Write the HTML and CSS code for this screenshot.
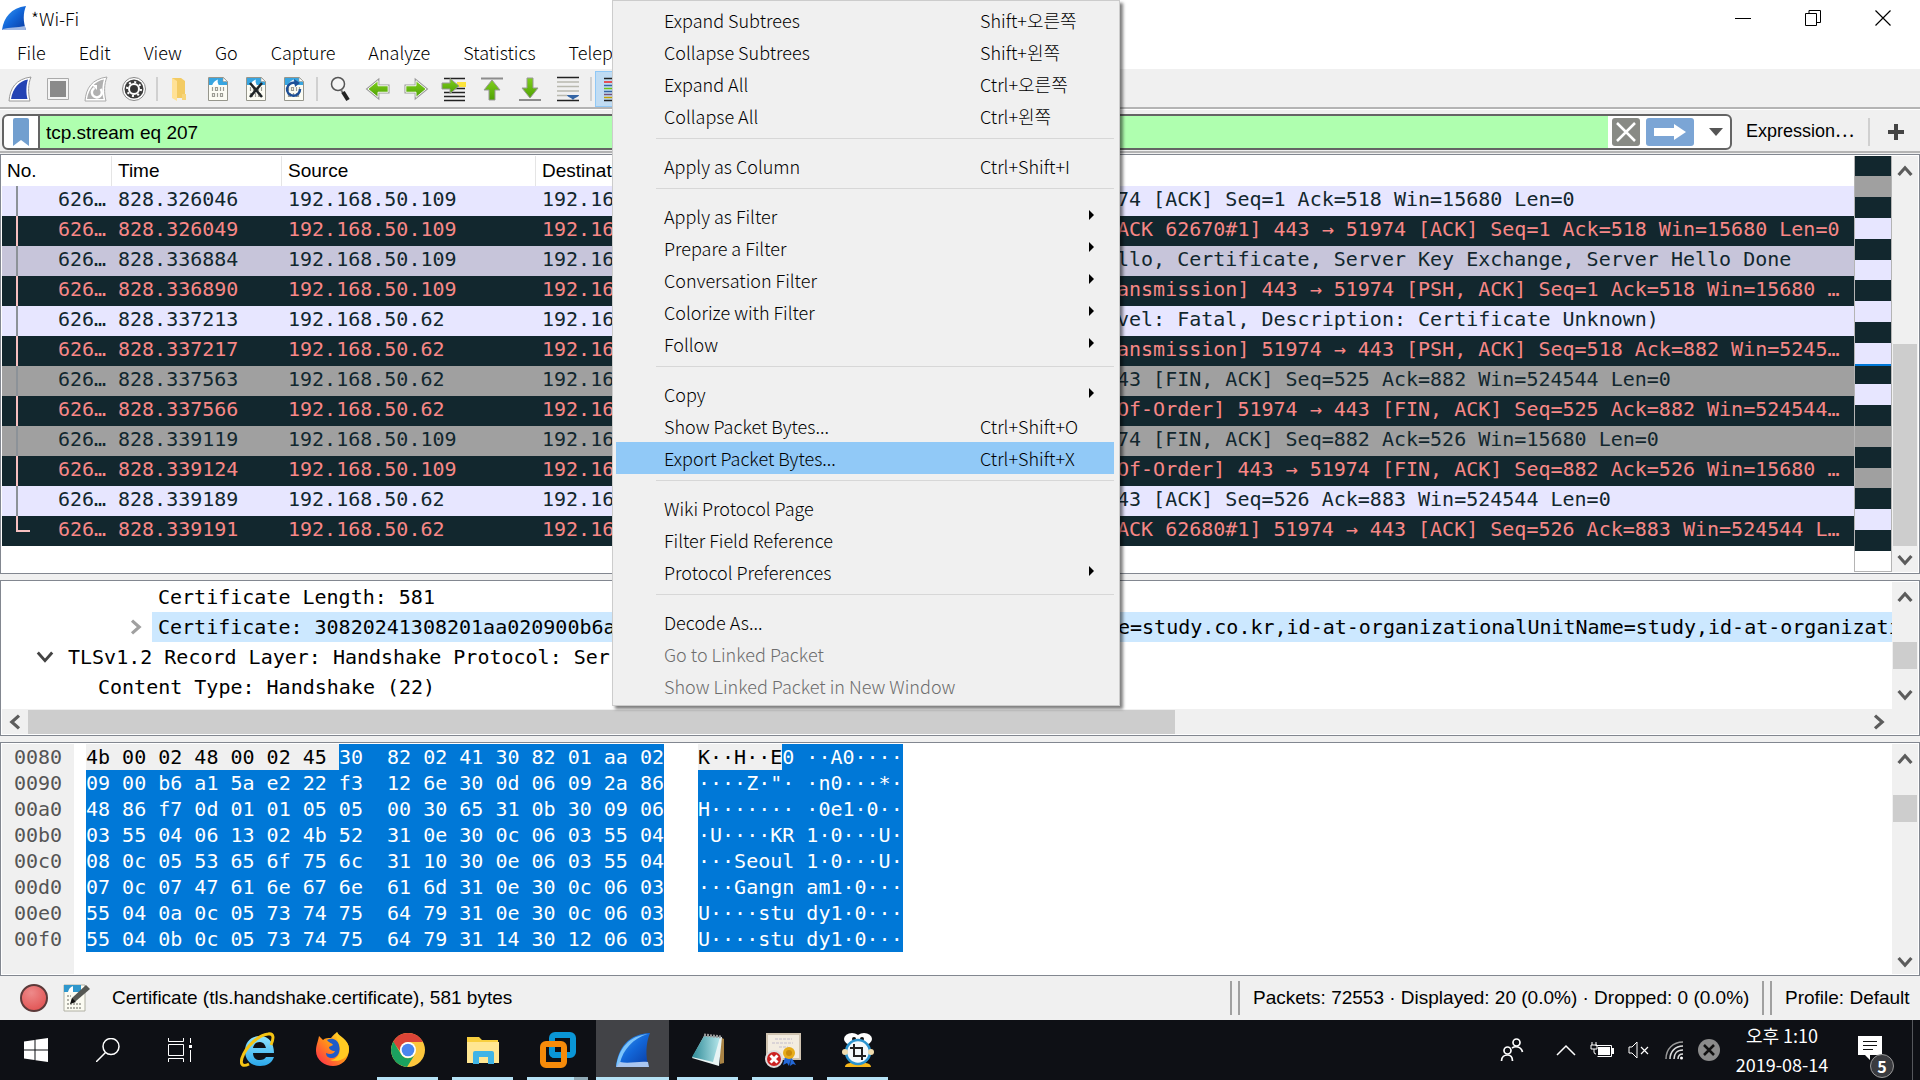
FILE: index.html
```html
<!DOCTYPE html>
<html lang="en">
<head>
<meta charset="utf-8">
<title>*Wi-Fi</title>
<link rel="stylesheet" href="styles.css">
</head>
<body>
<svg class="defs" width="0" height="0" aria-hidden="true">
  <defs>
    <linearGradient id="fin" x1="0" y1="0" x2="1" y2="1"><stop offset="0" stop-color="#3fa0f5"/><stop offset=".5" stop-color="#1266d8"/><stop offset="1" stop-color="#0a3aa0"/></linearGradient>
    <linearGradient id="green" x1="0" y1="0" x2="0" y2="1"><stop offset="0" stop-color="#7fd01c"/><stop offset="1" stop-color="#4fa005"/></linearGradient>
    <linearGradient id="ie" x1="0" y1="0" x2="0" y2="1"><stop offset="0" stop-color="#8fe4ff"/><stop offset="1" stop-color="#2aa7ea"/></linearGradient>
    <linearGradient id="fox" x1="1" y1="0" x2="0" y2="1"><stop offset="0" stop-color="#fff03a"/><stop offset=".45" stop-color="#ff9a16"/><stop offset="1" stop-color="#ff1f50"/></linearGradient>
    <linearGradient id="note" x1="0" y1="0" x2="1" y2="0"><stop offset="0" stop-color="#2f8b98"/><stop offset="1" stop-color="#b5e6ea"/></linearGradient>
    <radialGradient id="rec" cx=".4" cy=".3" r=".8"><stop offset="0" stop-color="#ee8a8a"/><stop offset="1" stop-color="#e04e4e"/></radialGradient>
    <symbol id="doc" viewBox="0 0 24 26">
      <path d="M2.500 1.500h15l4 4v19h-19z" fill="#fcfcf4" stroke="#96968c"/>
      <path d="M3 2h14l4 4v3H3z" fill="#38a5e0"/>
      <path d="M6 9.500c1-3 3-5 6-6-1 2 0 4 1 6z" fill="#fff"/>
      <path d="M17 1.500v4h4.500z" fill="#fff" stroke="#96968c" stroke-width=".6"/>
      <path d="M6.500 11v4M9.500 11.500h2v3h-2zM14.500 11v4M17.500 11v4M6.500 17.500h2v3h-2zM11.500 17v4M14.500 17.500h2v3h-2z" fill="none" stroke="#9c9c94" stroke-width="1.200"/>
    </symbol>
    <symbol id="arrow" viewBox="0 0 26 26"><path d="M2 9.500h11V4l11 9-11 9v-5.500H2z" fill="url(#green)" stroke="#9a9a9a" stroke-width="3"/><path d="M2 9.500h11V4l11 9-11 9v-5.500H2z" fill="url(#green)" stroke="#fff" stroke-width="1"/></symbol>
    <symbol id="up" viewBox="0 0 10 10"><path d="M1 7.500 5 3l4 4.500" fill="none" stroke="#5c5c5c" stroke-width="2"/></symbol>
  </defs>
</svg>

<div class="screen">
<main class="app">
  <header class="titlebar">
    <svg width="26" height="26" viewBox="0 0 26 26"><path d="M1 25C3 12 10 3 25 1c-3 7-3 16 0 24z" fill="url(#fin)"/><path d="M2 24c6-2 14-1 22-3l1 4H1z" fill="#9fb8e4"/></svg>
    <h1>*Wi-Fi</h1>
    <div class="winbtns">
      <button type="button" aria-label="Minimize"><svg width="16" height="16" viewBox="0 0 16 16"><path d="M0 8.500h16" stroke="#000"/></svg></button>
      <button type="button" aria-label="Restore"><svg width="16" height="16" viewBox="0 0 16 16"><path d="M.5 3.500h11v12H.5zM4 3V.5h11.500v12H12" fill="none" stroke="#000"/></svg></button>
      <button type="button" aria-label="Close"><svg width="16" height="16" viewBox="0 0 16 16"><path d="M.5.5l15 15M15.500.5l-15 15" stroke="#000" stroke-width="1.200"/></svg></button>
    </div>
  </header>

  <nav class="menubar">
    <button type="button">File</button><button type="button">Edit</button><button type="button">View</button><button type="button">Go</button><button type="button">Capture</button><button type="button">Analyze</button><button type="button">Statistics</button><button type="button">Telep</button>
  </nav>

  <div class="toolbar">
    <button type="button" aria-label="Start"><svg width="26" height="26" viewBox="0 0 26 26"><path d="M2 25C3 12 9 3 24 1c-3 7-3 16-1 24z" fill="#fff" stroke="#999"/><path d="M4 23C6 12 12 5 21 3.500c-2 6-2 14-.5 19.500z" fill="#2443b4"/></svg></button>
    <button type="button" aria-label="Stop"><svg width="26" height="26" viewBox="0 0 26 26"><path d="M2.500 2.500h21v21h-21z" fill="#f4f4f4" stroke="#aaa"/><path d="M5 5h16v16H5z" fill="#8a8a8a"/></svg></button>
    <button type="button" aria-label="Restart"><svg width="26" height="26" viewBox="0 0 26 26"><path d="M2 25C3 12 9 3 24 1c-3 7-3 16-1 24z" fill="#fff" stroke="#aaa"/><path d="M4 23C6 12 12 5 21 3.500c-2 6-2 14-.5 19.500z" fill="#b0b0b0"/><path d="M17.500 13a5 5 0 1 1-6-1" fill="none" stroke="#fff" stroke-width="2.500"/><path d="M9 9h5v5z" fill="#fff"/></svg></button>
    <button type="button" aria-label="Options"><svg width="26" height="26" viewBox="0 0 26 26"><circle cx="13" cy="13" r="11.500" fill="#fff" stroke="#888"/><circle cx="13" cy="13" r="9.500" fill="#3c3c3c"/><circle cx="13" cy="13" r="5" fill="none" stroke="#fff" stroke-width="2"/><circle cx="13" cy="13" r="7" fill="none" stroke="#fff" stroke-width="2" stroke-dasharray="2 3.500"/><circle cx="13" cy="13" r="3" fill="#333"/></svg></button>
    <i class="sep"></i>
    <button type="button" aria-label="Open"><svg width="26" height="26" viewBox="0 0 26 26"><path d="M5 2h9l4 3v17H5z" fill="#f3cb63"/><path d="M5 2l5 3v20l-5-3z" fill="#ffe196"/><path d="M15 18h4v6h-4z" fill="#f7d57b"/></svg></button>
    <button type="button" aria-label="Save"><svg width="26" height="26"><use href="#doc"/></svg></button>
    <button type="button" aria-label="Close file"><svg width="26" height="26"><use href="#doc"/><path d="M7 7l12 14M19 7 7 21" stroke="#1f2426" stroke-width="2.500"/></svg></button>
    <button type="button" aria-label="Reload"><svg width="26" height="26"><use href="#doc"/><path d="M19 13a6.500 6.500 0 1 1-5-6" fill="none" stroke="#1d4f96" stroke-width="2.500"/><path d="M13 3l6 4-5 4z" fill="#1d4f96"/></svg></button>
    <i class="sep"></i>
    <button type="button" aria-label="Find"><svg width="26" height="26" viewBox="0 0 26 26"><circle cx="11" cy="8" r="6.500" fill="#f4f4f4" stroke="#555" stroke-width="1.500"/><path d="M14 14l2 3" stroke="#777" stroke-width="2"/><path d="M16 16l5 8" stroke="#222" stroke-width="4"/></svg></button>
    <button type="button" aria-label="Back"><svg class="flip" width="26" height="24"><use href="#arrow"/></svg></button>
    <button type="button" aria-label="Forward"><svg width="26" height="24"><use href="#arrow"/></svg></button>
    <button type="button" aria-label="Go to packet"><svg width="26" height="26" viewBox="0 0 26 26"><path d="M3 2.500h21M3 16.500h21M3 20.500h21M3 24.500h21M13 12.500h11" stroke="#222" stroke-width="1.500"/><path d="M16 6h9v5h-9z" fill="#fbe33c"/><path d="M1 7h8V2.500l9 7.500-9 7.500V13H1z" fill="url(#green)" stroke="#999"/></svg></button>
    <button type="button" aria-label="First"><svg width="26" height="26" viewBox="0 0 26 26"><path d="M2 2.500h22" stroke="#8c8c8c" stroke-width="2"/><path d="M10 24V14H5l8-10 8 10h-5v10z" fill="url(#green)" stroke="#999"/></svg></button>
    <button type="button" aria-label="Last"><svg width="26" height="26" viewBox="0 0 26 26"><path d="M2 24h22" stroke="#8c8c8c" stroke-width="2"/><path d="M10 2v10H5l8 10 8-10h-5V2z" fill="url(#green)" stroke="#999"/></svg></button>
    <button type="button" aria-label="Auto scroll"><svg width="26" height="26" viewBox="0 0 26 26"><path d="M2 1.500h22M2 24.500h22" stroke="#222" stroke-width="1.500"/><path d="M2 6h22M2 10.500h22M2 15h22M2 19.500h10" stroke="#b8b8ae" stroke-width="1.500"/><path d="M12 19h12c0 2-4 2-6 5-2-3-6-3-6-5z" fill="#3465a4"/></svg></button>
    <i class="sep"></i>
    <button type="button" class="on" aria-label="Colorize"><svg width="26" height="26" viewBox="0 0 26 26"><path d="M3 2.500h21M3 24.500h21" stroke="#222" stroke-width="1.500"/><path d="M3 6h21" stroke="#e22" stroke-width="1.500"/><path d="M3 9.500h21M3 15.500h21" stroke="#3465a4" stroke-width="1.500"/><path d="M3 12.500h21" stroke="#6fc310" stroke-width="1.500"/><path d="M3 18.500h21" stroke="#75507b" stroke-width="1.500"/><path d="M3 21.500h21" stroke="#c4a000" stroke-width="1.500"/></svg></button>
  </div>

  <form class="filterbar">
    <div class="filterbox">
      <button type="button" class="mark" aria-label="Bookmark"><svg width="18" height="28" viewBox="0 0 18 28"><path d="M1 2q0-2 2-2h12q2 0 2 2v26l-8-6-8 6z" fill="#729fcf"/></svg></button>
      <input type="text" aria-label="Display filter" value="tcp.stream eq 207">
      <button type="button" class="clear" aria-label="Clear"><svg width="28" height="28" viewBox="0 0 28 28"><rect width="28" height="28" rx="3" fill="#888a85"/><path d="M5 5l18 18M23 5 5 23" stroke="#fff" stroke-width="2.500"/></svg></button>
      <button type="button" class="apply" aria-label="Apply"><svg width="48" height="28" viewBox="0 0 48 28"><rect width="48" height="28" rx="3" fill="#7ba5d5"/><path d="M8 10h20V6l12 8-12 8v-4H8z" fill="#fff"/></svg></button>
      <button type="button" class="drop" aria-label="History"><svg width="14" height="8" viewBox="0 0 14 8"><path d="M0 0h14L7 8z" fill="#555"/></svg></button>
    </div>
    <button type="button" class="expr">Expression⋯</button>
    <i class="sep"></i>
    <button type="button" class="plus" aria-label="Add"><svg width="16" height="16" viewBox="0 0 16 16"><path d="M8 0v16M0 8h16" stroke="#444" stroke-width="4"/></svg></button>
  </form>

  <div class="panes">
    <section class="pane packets">
      <div class="tablewrap">
      <table>
        <colgroup><col class="c-no"><col class="c-time"><col class="c-src"><col class="c-dst"><col></colgroup>
        <thead><tr><th>No.</th><th>Time</th><th>Source</th><th>Destinat</th><th></th></tr></thead>
        <tbody>
          <tr class="tls"><td>626…</td><td>828.326046</td><td>192.168.50.109</td><td>192.16</td><td>74 [ACK] Seq=1 Ack=518 Win=15680 Len=0</td></tr>
          <tr class="bad"><td>626…</td><td>828.326049</td><td>192.168.50.109</td><td>192.16</td><td>ACK 62670#1] 443 → 51974 [ACK] Seq=1 Ack=518 Win=15680 Len=0</td></tr>
          <tr class="sel"><td>626…</td><td>828.336884</td><td>192.168.50.109</td><td>192.16</td><td>llo, Certificate, Server Key Exchange, Server Hello Done</td></tr>
          <tr class="bad"><td>626…</td><td>828.336890</td><td>192.168.50.109</td><td>192.16</td><td>ansmission] 443 → 51974 [PSH, ACK] Seq=1 Ack=518 Win=15680 …</td></tr>
          <tr class="tls"><td>626…</td><td>828.337213</td><td>192.168.50.62</td><td>192.16</td><td>vel: Fatal, Description: Certificate Unknown)</td></tr>
          <tr class="bad"><td>626…</td><td>828.337217</td><td>192.168.50.62</td><td>192.16</td><td>ansmission] 51974 → 443 [PSH, ACK] Seq=518 Ack=882 Win=5245…</td></tr>
          <tr class="fin"><td>626…</td><td>828.337563</td><td>192.168.50.62</td><td>192.16</td><td>43 [FIN, ACK] Seq=525 Ack=882 Win=524544 Len=0</td></tr>
          <tr class="bad"><td>626…</td><td>828.337566</td><td>192.168.50.62</td><td>192.16</td><td>Of-Order] 51974 → 443 [FIN, ACK] Seq=525 Ack=882 Win=524544…</td></tr>
          <tr class="fin"><td>626…</td><td>828.339119</td><td>192.168.50.109</td><td>192.16</td><td>74 [FIN, ACK] Seq=882 Ack=526 Win=15680 Len=0</td></tr>
          <tr class="bad"><td>626…</td><td>828.339124</td><td>192.168.50.109</td><td>192.16</td><td>Of-Order] 443 → 51974 [FIN, ACK] Seq=882 Ack=526 Win=15680 …</td></tr>
          <tr class="tls"><td>626…</td><td>828.339189</td><td>192.168.50.62</td><td>192.16</td><td>43 [ACK] Seq=526 Ack=883 Win=524544 Len=0</td></tr>
          <tr class="bad last"><td>626…</td><td>828.339191</td><td>192.168.50.62</td><td>192.16</td><td>ACK 62680#1] 51974 → 443 [ACK] Seq=526 Ack=883 Win=524544 L…</td></tr>
        </tbody>
      </table>
      </div>
      <div class="minimap">
        <i class="bad" style="flex-grow:20"></i><i class="fin" style="flex-grow:21"></i><i class="bad" style="flex-grow:21"></i><i class="tls" style="flex-grow:21"></i><i class="bad" style="flex-grow:21"></i><i class="tls" style="flex-grow:20"></i><i class="bad" style="flex-grow:21"></i><i class="tls" style="flex-grow:21"></i><i class="bad" style="flex-grow:21"></i><i class="tls" style="flex-grow:21"></i><i class="cur" style="flex-grow:2"></i><i class="bad" style="flex-grow:18"></i><i class="tls" style="flex-grow:21"></i><i class="bad" style="flex-grow:21"></i><i class="fin" style="flex-grow:21"></i><i class="bad" style="flex-grow:21"></i><i class="fin" style="flex-grow:20"></i><i class="bad" style="flex-grow:21"></i><i class="tls" style="flex-grow:21"></i><i class="bad" style="flex-grow:21"></i><i style="flex-grow:20"></i>
      </div>
      <div class="vscroll">
        <svg width="16" height="16"><use href="#up"/></svg>
        <div class="track"><i style="flex-grow:158"></i><i class="thumb" style="flex-grow:202"></i></div>
        <svg class="down" width="16" height="16"><use href="#up"/></svg>
      </div>
    </section>

    <section class="pane details">
      <div class="detailmain">
        <ul class="tree">
          <li class="lv3"><span class="txt">Certificate Length: 581</span></li>
          <li class="lv3 picked"><svg class="tw right" width="16" height="16" viewBox="0 0 10 10"><path d="M1 7.500 5 3l4 4.500" fill="none" stroke="#a0a0a0" stroke-width="2"/></svg><span class="txt"><span class="lead">Certificate: 30820241308201aa020900b6a</span><span>e=study.co.kr,id-at-organizationalUnitName=study,id-at-organizati</span></span></li>
          <li class="lv1"><svg class="tw down" width="18" height="18" viewBox="0 0 10 10"><path d="M1 7.500 5 3l4 4.500" fill="none" stroke="#444" stroke-width="1.600"/></svg><span class="txt">TLSv1.2 Record Layer: Handshake Protocol: Ser</span></li>
          <li class="lv2"><span class="txt">Content Type: Handshake (22)</span></li>
        </ul>
        <div class="hscroll">
          <svg class="left" width="16" height="16"><use href="#up"/></svg>
          <div class="track"><i class="thumb" style="flex-grow:1146"></i><i style="flex-grow:690"></i></div>
          <svg class="right" width="16" height="16"><use href="#up"/></svg>
        </div>
      </div>
      <div class="vscroll short">
        <svg width="16" height="16"><use href="#up"/></svg>
        <div class="track"><i style="flex-grow:30"></i><i class="thumb" style="flex-grow:26"></i><i style="flex-grow:12"></i></div>
        <svg class="down" width="16" height="16"><use href="#up"/></svg>
      </div>
    </section>

    <section class="pane hex">
      <pre class="offsets">0080
0090
00a0
00b0
00c0
00d0
00e0
00f0</pre>
      <pre class="bytes"><span><b>4b 00 02 48 00 02 45 </b>30  82 02 41 30 82 01 aa 02</span>
<span>09 00 b6 a1 5a e2 22 f3  12 6e 30 0d 06 09 2a 86</span>
<span>48 86 f7 0d 01 01 05 05  00 30 65 31 0b 30 09 06</span>
<span>03 55 04 06 13 02 4b 52  31 0e 30 0c 06 03 55 04</span>
<span>08 0c 05 53 65 6f 75 6c  31 10 30 0e 06 03 55 04</span>
<span>07 0c 07 47 61 6e 67 6e  61 6d 31 0e 30 0c 06 03</span>
<span>55 04 0a 0c 05 73 74 75  64 79 31 0e 30 0c 06 03</span>
<span>55 04 0b 0c 05 73 74 75  64 79 31 14 30 12 06 03</span></pre>
      <pre class="bytes"><span><b>K··H··E</b>0 ··A0····</span>
<span>····Z·"· ·n0···*·</span>
<span>H······· ·0e1·0··</span>
<span>·U····KR 1·0···U·</span>
<span>···Seoul 1·0···U·</span>
<span>···Gangn am1·0···</span>
<span>U····stu dy1·0···</span>
<span>U····stu dy1·0···</span></pre>
      <div class="vscroll">
        <svg width="16" height="16"><use href="#up"/></svg>
        <div class="track"><i style="flex-grow:21"></i><i class="thumb" style="flex-grow:27"></i><i style="flex-grow:126"></i></div>
        <svg class="down" width="16" height="16"><use href="#up"/></svg>
      </div>
    </section>
  </div>

  <footer class="status">
    <svg width="28" height="28" viewBox="0 0 28 28"><circle cx="14" cy="14" r="13" fill="url(#rec)" stroke="#5c3a3a" stroke-width="2"/></svg>
    <svg class="edit" width="28" height="28" viewBox="0 0 28 28"><path d="M1 1h21v26H1z" fill="#fbfbf2" stroke="#b0b0a4"/><path d="M1 1h17v7H1z" fill="#2f97cc"/><path d="M5 8c1-4 3-5 5-6v6z" fill="#fff"/><path d="M4 12h4M4 16h3M4 20h14M4 24h14" stroke="#b0b0a8" stroke-width="2" stroke-dasharray="2 1"/><path d="M23 1l4 4-14 12-5 2 1-5z" fill="#555753"/><path d="M9 14l4 4-6 2z" fill="#111"/></svg>
    <span class="field">Certificate (tls.handshake.certificate), 581 bytes</span>
    <i class="grip"></i>
    <span class="count">Packets: 72553 · Displayed: 20 (0.0%) · Dropped: 0 (0.0%)</span>
    <i class="grip"></i>
    <span class="profile">Profile: Default</span>
  </footer>
</main>

<div class="context" role="menu">
  <button type="button" role="menuitem"><span>Expand Subtrees</span><kbd>Shift+오른쪽</kbd></button>
  <button type="button" role="menuitem"><span>Collapse Subtrees</span><kbd>Shift+왼쪽</kbd></button>
  <button type="button" role="menuitem"><span>Expand All</span><kbd>Ctrl+오른쪽</kbd></button>
  <button type="button" role="menuitem"><span>Collapse All</span><kbd>Ctrl+왼쪽</kbd></button>
  <hr>
  <button type="button" role="menuitem"><span>Apply as Column</span><kbd>Ctrl+Shift+I</kbd></button>
  <hr>
  <button type="button" role="menuitem" class="sub"><span>Apply as Filter</span></button>
  <button type="button" role="menuitem" class="sub"><span>Prepare a Filter</span></button>
  <button type="button" role="menuitem" class="sub"><span>Conversation Filter</span></button>
  <button type="button" role="menuitem" class="sub"><span>Colorize with Filter</span></button>
  <button type="button" role="menuitem" class="sub"><span>Follow</span></button>
  <hr>
  <button type="button" role="menuitem" class="sub"><span>Copy</span></button>
  <button type="button" role="menuitem"><span>Show Packet Bytes...</span><kbd>Ctrl+Shift+O</kbd></button>
  <button type="button" role="menuitem" class="hot"><span>Export Packet Bytes...</span><kbd>Ctrl+Shift+X</kbd></button>
  <hr>
  <button type="button" role="menuitem"><span>Wiki Protocol Page</span></button>
  <button type="button" role="menuitem"><span>Filter Field Reference</span></button>
  <button type="button" role="menuitem" class="sub"><span>Protocol Preferences</span></button>
  <hr>
  <button type="button" role="menuitem"><span>Decode As...</span></button>
  <button type="button" role="menuitem" disabled><span>Go to Linked Packet</span></button>
  <button type="button" role="menuitem" disabled><span>Show Linked Packet in New Window</span></button>
</div>

<div class="taskbar">
  <button type="button" class="sys" aria-label="Start menu"><svg width="24" height="24" viewBox="0 0 24 24"><path d="M0 3.500 10.500 2v9.500H0zM11.500 1.800 24 0v11.500H11.500zM0 12.500h10.500V22L0 20.500zM11.500 12.500H24V24l-12.500-1.800z" fill="#fff"/></svg></button>
  <button type="button" class="sys" aria-label="Search"><svg width="24" height="24" viewBox="0 0 24 24"><circle cx="15" cy="8.500" r="8" fill="none" stroke="#fff" stroke-width="1.500"/><path d="M9.500 14.500 0 24" stroke="#fff" stroke-width="1.500"/></svg></button>
  <button type="button" class="sys" aria-label="Task view"><svg width="24" height="24" viewBox="0 0 24 24"><path d="M.5 6.500h15v11H.5zM.5 0v3.500h15V0M.5 24v-3.500h15V24M22.500 0v5M22.500 12v12" fill="none" stroke="#fff"/><path d="M21 7h3v3h-3z" fill="#fff"/></svg></button>
  <div class="apps">
    <button type="button" aria-label="Internet Explorer"><svg width="36" height="36" viewBox="0 0 36 36"><path d="M34 21H13c0 5 3 7 7 7 3 0 5-1 6-3h8c-2 6-7 9-14 9C11 34 5 28 5 19S11 4 20 4s14 7 14 17zm-8-5c-1-4-3-6-6-6-4 0-6 2-7 6z" fill="url(#ie)"/><path d="M31 13c3-7 3-12-3-11C19 3 6 14 2 26c-2 7 1 9 7 6" fill="none" stroke="#f5c414" stroke-width="3"/></svg></button>
    <button type="button" aria-label="Firefox"><svg width="36" height="36" viewBox="0 0 36 36"><path d="M4 4l4 4c2-2 5-2 8-2 2-3 5-5 6-6 1 4 12 7 12 17 0 11-8 17-16 17S1 28 1 19C1 13 3 10 4 4z" fill="url(#fox)"/><path d="M12 8c5-3 11 0 12 5 2 6-1 13-7 13-4 0-6-2-6-5 4 2 8 1 9-2-4 0-6-2-6-4l4-2c-1-2-4-2-6-5z" fill="#205bc8"/><path d="M22 0c-2 6 3 10 3 17 0 8-6 11-10 11 9 3 19-2 19-11C34 8 24 7 22 0z" fill="#ffca22"/></svg></button>
    <button type="button" class="run" aria-label="Chrome"><svg width="34" height="34" viewBox="0 0 34 34"><circle cx="17" cy="17" r="17" fill="#fdc73c"/><path d="M2 9A17 17 0 0 1 32 9H17a8 8 0 0 0-8 9z" fill="#db4437"/><path d="M2.300 8.500A17 17 0 0 0 16 34l7.500-12A8 8 0 0 1 10 21z" fill="#1ba15f"/><circle cx="17" cy="17" r="8" fill="#fff"/><circle cx="17" cy="17" r="6.300" fill="#4a86ee"/></svg></button>
    <button type="button" class="run" aria-label="File Explorer"><svg width="34" height="28" viewBox="0 0 34 28"><path d="M1 1h12l3 3h16v22H1z" fill="#f8cf3f"/><path d="M1 6h32v21H1z" fill="#ffe692"/><path d="M7 28V17q0-2 2-2h17q2 0 2 2v11h-6v-7h-9v7z" fill="#3fb4e6"/></svg></button>
    <button type="button" class="run split" aria-label="VMware"><svg width="36" height="36" viewBox="0 0 36 36"><rect x="12" y="3" width="21" height="20" rx="3" fill="none" stroke="#0a96d6" stroke-width="6"/><rect x="3" y="12" width="21" height="21" rx="3" fill="none" stroke="#f68b0a" stroke-width="6"/><path d="M12 15v5q0 3 3 3h6" fill="none" stroke="#0a96d6" stroke-width="6"/></svg></button>
    <button type="button" class="run active" aria-label="Wireshark"><svg width="36" height="36" viewBox="0 0 36 36"><path d="M1 35C3 15 14 2 35 1c-4 9-5 24-1 34z" fill="url(#fin)"/><path d="M1 35C4 16 14 4 33 2 18 6 8 18 5 31z" fill="#7cc4fb"/><path d="M1 35l4-5c9 2 18-1 28 0l1 5z" fill="#a9c6f0"/></svg></button>
    <button type="button" class="run" aria-label="Notepad"><svg width="34" height="34" viewBox="0 0 34 34"><path d="M29 4l4 2v24l-4 1z" fill="#a88345"/><path d="M13 3l18 1-3 29L1 25z" fill="#e8f4f4"/><path d="M13 3l16 1-7 25L1 24z" fill="url(#note)"/><path d="M13 2l18 2" stroke="#999" stroke-width="3" stroke-dasharray="2 1"/></svg></button>
    <button type="button" class="run" aria-label="Certificate"><svg width="36" height="36" viewBox="0 0 36 36"><path d="M2 2h33v25H2z" fill="#f3ece0" stroke="#cfc3b0" stroke-width="2"/><path d="M10 7h17M7 11h21M14 15h9" stroke="#c2bccc" stroke-dasharray="3 1"/><path d="M20 25l-2 8 4-2 2 3 2-8zM26 25l5 8-3-1-3 2z" fill="#2368d8"/><circle cx="24" cy="21" r="6" fill="#e6ac1a"/><circle cx="24" cy="21" r="3" fill="#c98a0a"/><circle cx="9" cy="27" r="8" fill="#cc2222" stroke="#ddd" stroke-width="2"/><path d="M5.500 23.500l7 7M12.500 23.500l-7 7" stroke="#fff" stroke-width="3"/></svg></button>
    <button type="button" class="run" aria-label="Capture tool"><svg width="34" height="36" viewBox="0 0 34 36"><ellipse cx="11" cy="7" rx="8" ry="6" fill="#fff"/><ellipse cx="23" cy="7" rx="8" ry="6" fill="#fff"/><circle cx="13" cy="7" r="2" fill="#111"/><circle cx="21" cy="7" r="2" fill="#111"/><path d="M4 35c0-5 10-5 13-2 3-3 13-3 13 2z" fill="#f9b81a"/><circle cx="17" cy="20" r="12" fill="#f4f9fb" stroke="#2b94cf" stroke-width="2.500"/><path d="M13 12v12h12M9 16h12v12" fill="none" stroke="#222" stroke-width="2"/><circle cx="4" cy="20" r="3" fill="#f0dcae"/><circle cx="30" cy="20" r="3" fill="#f0dcae"/></svg></button>
  </div>
  <div class="tray">
    <svg class="people" width="24" height="24" viewBox="0 0 24 24" fill="none" stroke="#fff" stroke-width="1.700"><circle cx="7.500" cy="12.500" r="3.500"/><path d="M1.500 23c0-4 3-6 6-6s5 2 5 6"/><circle cx="16.500" cy="4.500" r="3.500"/><path d="M12 10c3-2 9-2 10.500 4"/></svg>
    <svg width="20" height="12" viewBox="0 0 20 12"><path d="M1 11l9-9 9 9" fill="none" stroke="#fff" stroke-width="1.500"/></svg>
    <svg width="24" height="18" viewBox="0 0 24 18"><path d="M5.500 4.500h16v11h-14" fill="none" stroke="#fff"/><path d="M8 6h12v8H8zM22 7h2v6h-2z" fill="#fff"/><path d="M1 4h6v4H1zM2 1v3M6 1v3M4 8v3q0 2 2 2" fill="none" stroke="#fff"/></svg>
    <svg width="22" height="20" viewBox="0 0 22 20"><path d="M1 7h3l5-5v16l-5-5H1z" fill="none" stroke="#fff"/><path d="M13 7l7 7M20 7l-7 7" stroke="#fff" stroke-width="1.200"/></svg>
    <svg width="20" height="20" viewBox="0 0 20 20"><path d="M2 19C2 9 9 2 19 2" fill="none" stroke="#999" stroke-width="1.500"/><path d="M6 19c0-7 5-13 13-13M10 19c0-5 3-9 9-9M14 19c0-3 2-5 5-5" fill="none" stroke="#ddd" stroke-width="1.500"/><circle cx="17.500" cy="18" r="1.500" fill="#fff"/></svg>
    <svg width="22" height="22" viewBox="0 0 22 22"><circle cx="11" cy="11" r="11" fill="#8b8b8b"/><path d="M6 6l10 10M16 6 6 16" stroke="#111" stroke-width="2.500"/></svg>
    <time class="clock"><span>오후 1:10</span><span>2019-08-14</span></time>
    <button type="button" class="notif" aria-label="Notifications"><svg width="24" height="24" viewBox="0 0 24 24"><path d="M0 0h24v19H12v5l-5-5H0z" fill="#fff"/><path d="M5 5.500h14M5 9.500h14M5 13.500h10" stroke="#111" stroke-width="1.200"/></svg><span class="badge">5</span></button>
  </div>
</div>
</div>
</body>
</html>
```
FILE: styles.css
```css
* { box-sizing: border-box; }

body {
  margin: 0;
  background: #f0f0f0;
  color: #000;
  font: 300 18px/24px "Noto Sans CJK KR", sans-serif;
}

button {
  margin: 0;
  padding: 0;
  border: 0;
  background: none;
  color: inherit;
  font: inherit;
}

svg { display: block; flex: none; }
.defs { position: absolute; }
.flip { transform: scaleX(-1); }
.down { transform: rotate(180deg); }
.left { transform: rotate(-90deg); }
.right { transform: rotate(90deg); }

.screen {
  position: relative;
  display: flex;
  flex-direction: column;
  height: 100vh;
  overflow: hidden;
}

.app {
  flex: 1;
  min-height: 0;
  display: flex;
  flex-direction: column;
}

/* title and menus */
.titlebar {
  display: flex;
  align-items: center;
  height: 35px;
  padding: 0 2px 0 1px;
  background: #fff;
}
.titlebar h1 { margin: 0 auto 0 4px; font-size: 18px; font-weight: inherit; }
.winbtns { display: flex; }
.winbtns button { display: grid; place-items: center; width: 70px; height: 34px; }

.menubar {
  display: flex;
  height: 36px;
  padding-left: 1px;
  background: #fff;
  border-bottom: 2px solid #f0f0f0;
}
.menubar button { padding: 0 17px 0 16px; }

.toolbar {
  display: flex;
  align-items: center;
  height: 38px;
  padding: 0 1px;
  border-bottom: 2px solid #b4b4b4;
}
.toolbar button { display: grid; place-items: center; width: 38px; height: 36px; }
.toolbar .on { background: #c0dcf3; border: 1px solid #90c8f6; }
.toolbar .sep { width: 2px; height: 24px; margin: 0 3px; background: #d0d0d0; }

/* display filter */
.filterbar {
  display: flex;
  align-items: center;
  height: 44px;
  padding: 3px 16px 0 2px;
  border-top: 1px solid #fff;
  border-bottom: 2px solid #b4b4b4;
  font: 19px/24px "Liberation Sans", "Noto Sans CJK KR", sans-serif;
}
.filterbox {
  flex: 1;
  display: flex;
  align-items: center;
  height: 36px;
  border: 2px solid #646464;
  border-radius: 6px;
  background: #fff;
  overflow: hidden;
}
.filterbox .mark { display: grid; place-items: center; width: 36px; height: 32px; border-right: 2px solid #646464; }
.filterbox input {
  flex: 1;
  min-width: 0;
  height: 32px;
  margin-right: 4px;
  padding: 2px 6px 0;
  border: 0;
  background: #afffaf;
  color: #000;
  font: inherit;
}
.filterbox .apply { margin-left: 6px; }
.filterbox .drop { display: grid; place-items: center; width: 36px; height: 32px; padding-left: 8px; }
.filterbar .expr { margin-left: 14px; padding-bottom: 3px; width: 110px; text-align: left; font-size: 18px; white-space: nowrap; }
.filterbar .sep { width: 2px; height: 28px; margin: 0 18px 0 12px; background: #d0d0d0; }

/* panes */
.panes {
  flex: 1;
  min-height: 0;
  display: grid;
  grid-template-rows: 420fr 156fr 234fr;
  gap: 6px;
  padding-top: 1px;
  font: 20px/30px "DejaVu Sans Mono", monospace;
}
.pane {
  display: flex;
  min-width: 0;
  min-height: 0;
  padding: 1px;
  border: 1px solid #828790;
  background: #fff;
  overflow: hidden;
}

.tablewrap { flex: 1; min-width: 0; overflow: hidden; }
table { width: 100%; table-layout: fixed; border-collapse: separate; border-spacing: 0; }
.c-no { width: 110px; }
.c-time { width: 170px; }
.c-src { width: 254px; }
.c-dst { width: 575px; }
th, td { height: 30px; padding: 0 0 0 6px; overflow: hidden; white-space: nowrap; text-align: left; }
td { padding-bottom: 4px; line-height: 26px; }
th {
  border-right: 1px solid #e5e5e5;
  font: 19px/30px "Liberation Sans", sans-serif;
}
th:first-child { padding-left: 5px; }
th:nth-child(n+4) { border-right: 0; }
td:first-child {
  padding-left: 56px;
  background: linear-gradient(#8c9298, #8c9298) 14px 0 / 2px 100% no-repeat;
}
.bad td:first-child { background-image: linear-gradient(#f7c0c0, #f7c0c0); }
.last td:first-child {
  background:
    linear-gradient(#f7c0c0, #f7c0c0) 14px 0 / 2px 14px no-repeat,
    linear-gradient(#f7c0c0, #f7c0c0) 14px 14px / 14px 2px no-repeat;
}
.tls { background: #e7e6ff; color: #12272e; }
.bad { background: #12272e; color: #f78787; }
.fin { background: #a0a0a0; color: #12272e; }
.sel { background: #c7c5da; color: #12272e; }
.cur { background: #0078d7; }

.minimap {
  display: flex;
  flex-direction: column;
  width: 38px;
  border: solid #b4b4b4;
  border-width: 0 1px 1px;
}
.minimap i { flex: 1 1 0; }

.vscroll {
  display: flex;
  flex-direction: column;
  align-items: center;
  width: 26px;
  padding: 7px 0 4px;
  background: #f0f0f0;
}
.vscroll.short { padding-bottom: 31px; }
.track { flex: 1; display: flex; }
.track i { flex: 1 1 0; }
.thumb { background: #cdcdcd; }
.vscroll .track { flex-direction: column; width: 24px; margin: 7px 0 6px; }

.detailmain { flex: 1; min-width: 0; display: flex; flex-direction: column; }
.tree { flex: 1; min-height: 0; margin: 0; padding: 0; list-style: none; overflow: hidden; }
.tree li { display: flex; align-items: center; height: 30px; white-space: nowrap; }
.tree .txt { flex: 1; min-width: 0; display: flex; overflow: hidden; padding-left: 6px; }
.tree .lead { flex: none; width: 960px; }
.tree .tw { margin-right: 8px; }
.tree .lv3 { padding-left: 150px; }
.tree .lv3 .tw { margin-left: -24px; }
.tree .lv2 { padding-left: 90px; }
.tree .lv1 { padding-left: 60px; }
.tree .lv1 .tw { margin-left: -26px; }
.picked .txt { background: #cce8ff; }
.hscroll { display: flex; align-items: center; height: 25px; padding: 0 5px; background: #f0f0f0; }
.hscroll .track { height: 24px; margin: 0 5px; }

.hex { line-height: 26px; }
.hex pre { margin: 0; font: inherit; }
.hex .offsets { width: 72px; padding-left: 12px; background: #f0f0f0; color: #555; }
.hex .bytes { margin-left: 12px; margin-right: 22px; color: #fff; }
.hex .bytes span { display: inline-block; background: #0078d7; }
.hex .bytes b { display: inline-block; background: #f0f0f0; color: #000; font-weight: 400; }
.hex .vscroll { margin-left: auto; }

/* status bar */
.status {
  display: flex;
  align-items: center;
  height: 44px;
  padding: 0 9px 0 20px;
  font: 19px/24px "Liberation Sans", sans-serif;
}
.status .edit { margin: 0 21px 0 15px; }
.status .field { margin-right: auto; }
.status .grip { width: 10px; height: 34px; border: solid #a0a0a0; border-width: 0 2px; }
.status .count { width: 499px; margin: 0 10px 0 13px; white-space: nowrap; }
.status .profile { width: 126px; margin-left: 13px; white-space: nowrap; }

/* context menu over the window */
.context {
  position: absolute;
  left: 612px;
  top: 0;
  width: 508px;
  padding: 3px 5px 3px 3px;
  border: 1px solid #ccc;
  background: #f0f0f0;
  box-shadow: 3px 3px 3px rgba(0, 0, 0, .5);
  font-size: 18px;
  line-height: 32px;
}
.context button {
  display: grid;
  grid-template-columns: 316px 1fr;
  width: 100%;
  height: 32px;
  padding-left: 48px;
  align-items: center;
  text-align: left;
  white-space: nowrap;
}
.context kbd { font: inherit; }
.context hr { height: 1px; margin: 6px 0 11px 40px; border: 0; background: #d7d7d7; }
.context .hot { background: #91c9f7; }
.context button:disabled { color: #6d6d6d; }
.context .sub::after {
  content: "";
  justify-self: end;
  margin: 0 20px 2px 0;
  border: solid transparent;
  border-width: 5px 0 5px 5px;
  border-left-color: #000;
}

/* taskbar */
.taskbar { display: flex; height: 60px; background: #0e1015; color: #fff; }
.taskbar button { display: grid; place-items: center; }
.sys { width: 72px; }
.apps { display: flex; gap: 2px; margin-left: 5px; }
.apps button { width: 73px; }
.apps .run {
  background: linear-gradient(#b5e2f5, #b5e2f5) center bottom / 61px 3px no-repeat;
}
.apps .active { background: linear-gradient(#b5e2f5, #b5e2f5) center bottom / 100% 3px no-repeat #424347; }
.apps .split {
  background:
    linear-gradient(#8fa9b5, #8fa9b5) 53px bottom / 14px 3px no-repeat,
    linear-gradient(#b5e2f5, #b5e2f5) center bottom / 61px 3px no-repeat;
}
.tray { display: flex; align-items: center; gap: 14px; margin-left: auto; border-right: 1px solid #55575c; margin-right: 7px; }
.tray .people { margin-right: 18px; }
.clock { display: grid; width: 96px; text-align: center; font-size: 18px; font-weight: 400; line-height: 29px; }
.taskbar .notif { position: relative; width: 24px; margin: 0 30px 4px 14px; }
.badge {
  position: absolute;
  left: 12px;
  top: 18px;
  width: 24px;
  height: 24px;
  border: 1px solid #999;
  border-radius: 50%;
  background: #3a3b3f;
  font-size: 16px;
  font-weight: 700;
  line-height: 22px;
}
```
